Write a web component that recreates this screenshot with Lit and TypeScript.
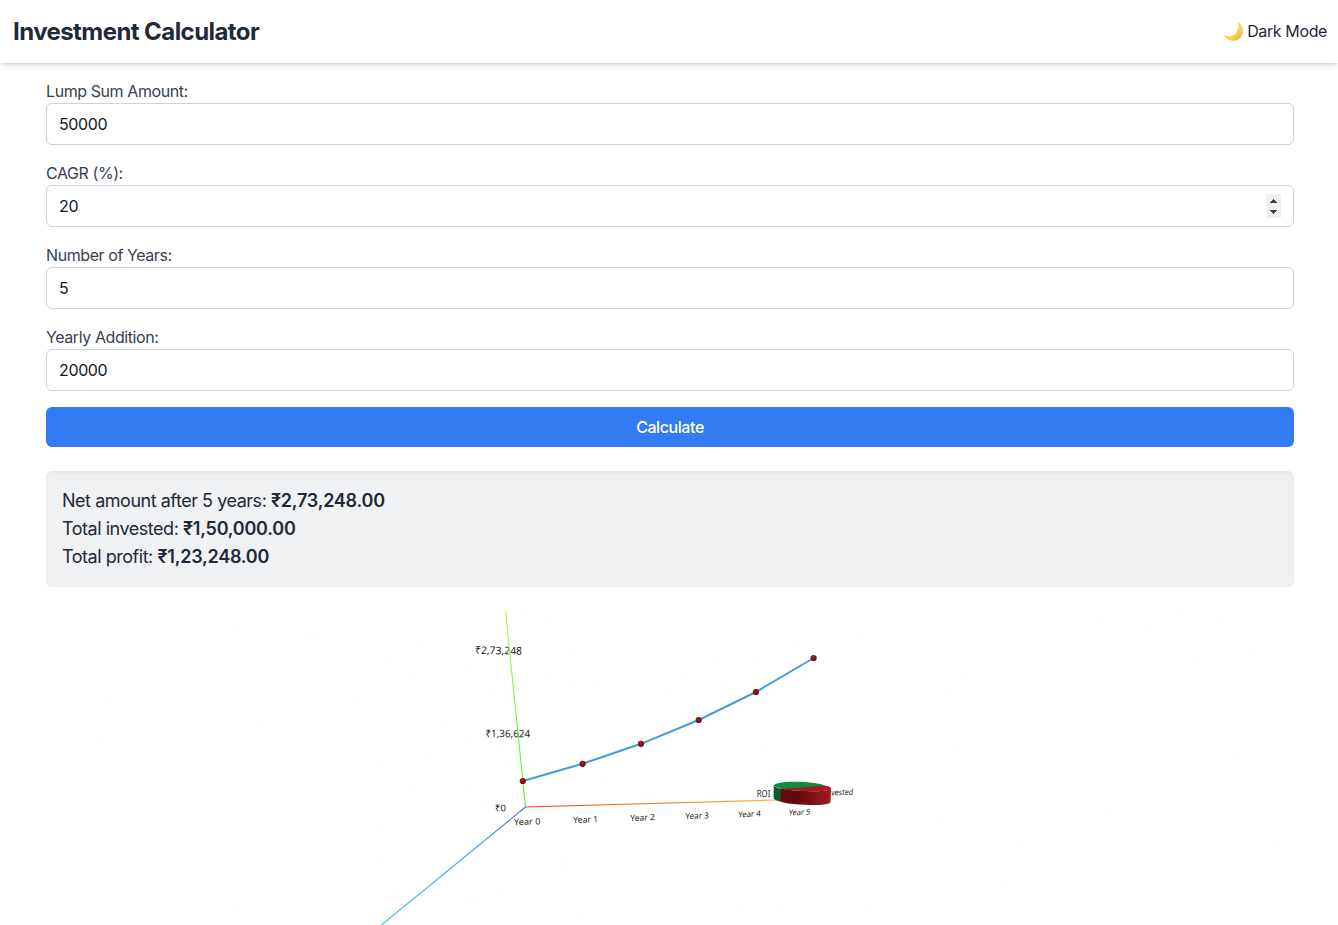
import { LitElement, html, svg, css } from "lit";
import { customElement, state } from "lit/decorators.js";

const POINTS = [[522.8, 781], [582.6, 763.8], [641, 743.8], [698.7, 720], [755.9, 692], [813.6, 658]];

const STARS: number[][] = [
  [526, 612], [551, 616], [420, 646], [412, 673], [465, 665], [387, 657], [574, 655], [545, 673], [571, 685], [598, 683],
  [490, 688], [353, 703], [446, 724], [426, 758], [383, 767], [468, 743], [497, 749], [505, 764], [549, 762], [413, 787],
  [471, 787], [483, 803], [602, 781], [383, 857], [394, 891], [376, 827], [473, 903], [470, 903], [579, 916], [566, 869],
  [564, 861], [502, 888], [798, 645], [715, 658], [755, 661], [680, 672], [721, 680], [803, 678], [664, 695], [735, 715],
  [657, 729], [642, 757], [760, 745], [775, 774], [782, 775], [786, 828], [858, 632], [945, 688], [964, 679], [237, 627],
  [308, 633], [311, 635], [316, 632], [263, 722], [111, 699], [103, 742], [236, 911], [1023, 840], [938, 822], [1004, 881],
  [1108, 815], [1272, 843], [1236, 757], [1196, 661], [1248, 652], [1222, 620], [1178, 612], [1097, 621], [1150, 629],
  [955, 747], [739, 908], [782, 910], [865, 904],
];

@customElement("spin-buttons")
class SpinButtons extends LitElement {
  static styles = css`
    :host { display: block; width: 15px; height: 24px; background: #efefef; }
    svg { display: block; }
  `;
  render() {
    return html`<svg width="15" height="24" viewBox="0 0 15 24">
      <path fill="#404040" d="M7 5h1v1h1v1h1v1h1v1H4V8h1V7h1V6h1zM4 16h7v1h-1v1H9v1H8v1H7v-1H6v-1H5v-1H4z" />
    </svg>`;
  }
}

@customElement("growth-chart")
class GrowthChart extends LitElement {
  static styles = css`
    :host { display: block; height: 314px; overflow: hidden; }
    svg { display: block; }
    text { font-family: "Noto Sans", sans-serif; fill: #1c1c1c; }
  `;
  private label(t: string, x: number, y: number, w: number, size: number, angle = 0, skew = 0) {
    return svg`<text font-size=${size} textLength=${w} lengthAdjust="spacingAndGlyphs"
      transform="translate(${x} ${y}) rotate(${angle}) skewX(${skew})">${t}</text>`;
  }
  render() {
    return html`<svg width="1338" height="314" viewBox="0 611 1338 314">
      <defs>
        <linearGradient id="gx" gradientUnits="userSpaceOnUse" x1="525" y1="807" x2="790" y2="799">
          <stop offset="0" stop-color="#ff3524" /><stop offset="1" stop-color="#ffbf3a" />
        </linearGradient>
        <linearGradient id="gy" gradientUnits="userSpaceOnUse" x1="525.5" y1="807" x2="505.5" y2="611">
          <stop offset="0" stop-color="#3cf63c" /><stop offset="1" stop-color="#a2fb4c" />
        </linearGradient>
        <linearGradient id="gz" gradientUnits="userSpaceOnUse" x1="525" y1="807" x2="381" y2="925">
          <stop offset="0" stop-color="#4668f8" /><stop offset=".4" stop-color="#46a0f8" /><stop offset="1" stop-color="#48b8fa" />
        </linearGradient>
        <radialGradient id="ball" cx=".4" cy=".35" r=".65">
          <stop offset="0" stop-color="#a81c22" /><stop offset="1" stop-color="#62080e" />
        </radialGradient>
        <linearGradient id="side" x1="0" x2="1" y1="0" y2="0">
          <stop offset="0" stop-color="#670b11" /><stop offset=".35" stop-color="#62090f" />
          <stop offset=".8" stop-color="#8c171b" /><stop offset="1" stop-color="#a01c20" />
        </linearGradient>
      </defs>
      ${STARS.map(([x, y]) => svg`<rect x=${x} y=${y} width="1" height="1" fill="#e6e6e6" />`)}
      ${this.label("₹2,73,248", 475, 653.8, 47, 10.6, 1)}
      ${this.label("₹1,36,624", 485.5, 737, 44.5, 10.2, 0.5)}
      ${this.label("₹0", 495, 811.3, 11, 9, -1)}
      ${this.label("Year 0", 514, 825, 26.5, 8.8, -1.5)}
      ${this.label("Year 1", 573.3, 823, 25, 8.7, -2)}
      ${this.label("Year 2", 630.3, 821.2, 24.5, 8.6, -2.5, -3)}
      ${this.label("Year 3", 685.3, 819.2, 23.5, 8.4, -2.5, -5)}
      ${this.label("Year 4", 738, 817.4, 22.5, 8.2, -2.5, -7)}
      ${this.label("Year 5", 788.5, 815.5, 21.5, 8, -2.5, -9)}
      ${this.label("ROI", 756.8, 797.2, 13.5, 8.4)}
      ${this.label("vested", 831, 795.5, 22, 8.2, -2, -9)}
      <g fill="none" stroke-width="1.1">
        <path d="M525.5 807L381.5 925" stroke="url(#gz)" />
        <path d="M525.5 807L505.5 611" stroke="url(#gy)" />
        <path d="M525.5 807L776 800" stroke="url(#gx)" />
      </g>
      <polyline points=${POINTS.map((p) => p.join(",")).join(" ")} fill="none" stroke="#429fd0" stroke-width="2" />
      ${POINTS.map(([x, y]) => svg`<circle cx=${x} cy=${y} r="3.1" fill="url(#ball)" />`)}
      <path fill="#128b46" d="M773.7 786c0-2.500 8-4.200 20-4.200 13 0 24 1.300 31.500 3.600L805 790l-24 -1.200z" />
      <path fill="#0a5c2b" d="M773.7 785.5c.8 1.3 4 2.6 7.3 3.3v13c-4.5-.8-7-2.3-7.4-3.8z" />
      <path fill="#a01f21" d="M780.8 788.8l44.4-3.4c4 .8 5.8 1.8 5.9 3 0 1.6-5 2.8-18 2.9-14 .1-25-.9-32.3-2.5z" />
      <path fill="url(#side)" d="M780.7 788.6c8 1.7 18 2.7 32 2.6 13-.1 18.3-1.4 18.4-3l-.6 13.6c-.5 2.2-6.5 3.4-15 3.3-15-.1-27.5-1.2-34.8-3.3z" />
    </svg>`;
  }
}

@customElement("app-root")
class AppRoot extends LitElement {
  static styles = css`
    :host {
      display: block; height: 925px; overflow: hidden; background: #fff; color: #1f2937;
      font: 16px/24px Inter, sans-serif;
    }
    * { box-sizing: border-box; }
    .header {
      height: 63px; padding: 0 11px 0 13px; display: flex; align-items: center; justify-content: space-between;
      box-shadow: 0 4px 6px -1px rgb(0 0 0 / 0.1), 0 2px 4px -2px rgb(0 0 0 / 0.1), 0 0 2px rgb(0 0 0 / 0.12);
    }
    .title { margin: 0; font-size: 24px; line-height: 32px; font-weight: 700; letter-spacing: -0.57px; }
    .mode {
      display: flex; align-items: center; gap: 3px; padding: 0 0 2px; border: 0; background: none;
      font: inherit; color: inherit; letter-spacing: -0.38px;
    }
    .moon { display: block; }
    .form { display: flex; flex-direction: column; gap: 16px; padding: 16px 44px 0 46px; }
    .label { display: block; color: #374151; letter-spacing: -0.42px; }
    .box {
      height: 42px; display: flex; align-items: center; border: 1px solid #cdd0d7; border-radius: 6px;
      padding: 0 12px; background: #fff;
    }
    .input {
      flex: 1; min-width: 0; border: 0; outline: 0; padding: 0; background: none;
      font: inherit; color: #111827; letter-spacing: -0.36px;
    }
    .submit {
      height: 40px; border: 0; border-radius: 6px; background: #327bf2; color: #fff;
      font: inherit; font-weight: 500; letter-spacing: -0.42px;
    }
    .result {
      margin: 24px 44px 24px 46px; padding: 16px; height: 116px; border-radius: 6px; background: #f0f1f3;
      font-size: 18px; line-height: 28px; box-shadow: inset 0 2px 4px rgb(0 0 0 / 0.05); letter-spacing: -0.47px;
    }
    .result p { margin: 0; }
    .amount { font-weight: 600; letter-spacing: -0.23px; }
  `;

  @state() private fields = [
    { label: "Lump Sum Amount:", value: "50000", spin: false },
    { label: "CAGR (%):", value: "20", spin: true },
    { label: "Number of Years:", value: "5", spin: false },
    { label: "Yearly Addition:", value: "20000", spin: false },
  ];

  render() {
    return html`
      <header class="header">
        <h1 class="title">Investment Calculator</h1>
        <button class="mode">
          <svg class="moon" width="21" height="22" viewBox="0 0 21 22">
            <defs><linearGradient id="m" x1="0" y1="0" x2="1" y2="1">
              <stop offset="0" stop-color="#ffe391" /><stop offset=".65" stop-color="#fbd04f" /><stop offset="1" stop-color="#dfa22c" />
            </linearGradient></defs>
            <path fill="url(#m)" d="M14.2 1.500c4 2.100 6.300 6.300 5.500 11-1 5.800-6.300 9.100-11.500 8.100C4.900 20 2.200 18 .5 15.100c3.500 1.800 7.700 1.800 11.100-.6 3.900-3 5-8.600 2.600-13z" />
          </svg>
          <span>Dark Mode</span>
        </button>
      </header>
      <main>
        <div class="form">
          ${this.fields.map((f) => html`<label>
            <span class="label">${f.label}</span>
            <span class="box"><input class="input" .value=${f.value} />${f.spin ? html`<spin-buttons></spin-buttons>` : ""}</span>
          </label>`)}
          <button class="submit">Calculate</button>
        </div>
        <section class="result">
          <p>Net amount after 5 years: <span class="amount">₹2,73,248.00</span></p>
          <p>Total invested: <span class="amount">₹1,50,000.00</span></p>
          <p>Total profit: <span class="amount">₹1,23,248.00</span></p>
        </section>
        <growth-chart></growth-chart>
      </main>`;
  }
}
